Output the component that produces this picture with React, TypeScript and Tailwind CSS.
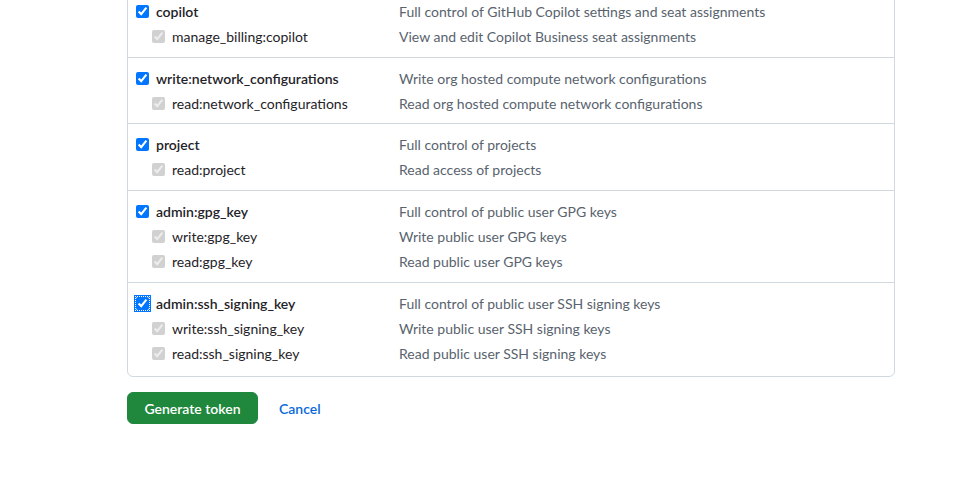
import React from "react";

interface Scope {
  name: string;
  desc: string;
}

interface ScopeGroup {
  parent: Scope;
  children: Scope[];
  focused?: boolean;
  pad: string;
}

const groups: ScopeGroup[] = [
  {
    parent: { name: "copilot", desc: "Full control of GitHub Copilot settings and seat assignments" },
    children: [{ name: "manage_billing:copilot", desc: "View and edit Copilot Business seat assignments" }],
    pad: "py-2",
  },
  {
    parent: { name: "write:network_configurations", desc: "Write org hosted compute network configurations" },
    children: [{ name: "read:network_configurations", desc: "Read org hosted compute network configurations" }],
    pad: "pt-2 pb-[7px]",
  },
  {
    parent: { name: "project", desc: "Full control of projects" },
    children: [{ name: "read:project", desc: "Read access of projects" }],
    pad: "py-2",
  },
  {
    parent: { name: "admin:gpg_key", desc: "Full control of public user GPG keys" },
    children: [
      { name: "write:gpg_key", desc: "Write public user GPG keys" },
      { name: "read:gpg_key", desc: "Read public user GPG keys" },
    ],
    pad: "py-2",
  },
  {
    parent: { name: "admin:ssh_signing_key", desc: "Full control of public user SSH signing keys" },
    children: [
      { name: "write:ssh_signing_key", desc: "Write public user SSH signing keys" },
      { name: "read:ssh_signing_key", desc: "Read public user SSH signing keys" },
    ],
    focused: true,
    pad: "pt-2 pb-[10px]",
  },
];

const App: React.FC = () => {
  return (
    <div className="min-h-[493px] bg-white font-['Lato',sans-serif] text-[14px] text-[#1f2328]">
      <div className="ml-[127px] w-[768px] -mt-[10px] rounded-b-md border border-[#d1d9e0]">
        {groups.map((group, i) => (
          <div
            key={group.parent.name}
            className={`${group.pad} pl-2 ${i > 0 ? "border-t border-[#d1d9e0]" : ""}`}
          >
            <div className="flex h-[25px] items-center">
              <label className="flex w-[263px] items-center gap-[7px] font-semibold">
                <input
                  type="checkbox"
                  defaultChecked
                  className={`h-[13px] w-[13px] ${
                    group.focused ? "outline-1 outline-dotted outline-white ring-2 ring-[#0075ff]" : ""
                  }`}
                />
                {group.parent.name}
              </label>
              <span className="text-[#59636e]">{group.parent.desc}</span>
            </div>
            {group.children.map((child) => (
              <div key={child.name} className="flex h-[25px] items-center">
                <label className="flex w-[263px] items-center gap-[7px] pl-4">
                  <input type="checkbox" defaultChecked disabled className="h-[13px] w-[13px]" />
                  {child.name}
                </label>
                <span className="text-[#59636e]">{child.desc}</span>
              </div>
            ))}
          </div>
        ))}
      </div>

      <div className="ml-[127px] mt-[15px] flex items-center">
        <button className="h-8 w-[131px] rounded-md border border-[#1f883d] bg-[#1f883d] font-semibold text-white">
          Generate token
        </button>
        <a className="ml-[21px] font-semibold text-[#0969da]">Cancel</a>
      </div>
    </div>
  );
};

export default App;
